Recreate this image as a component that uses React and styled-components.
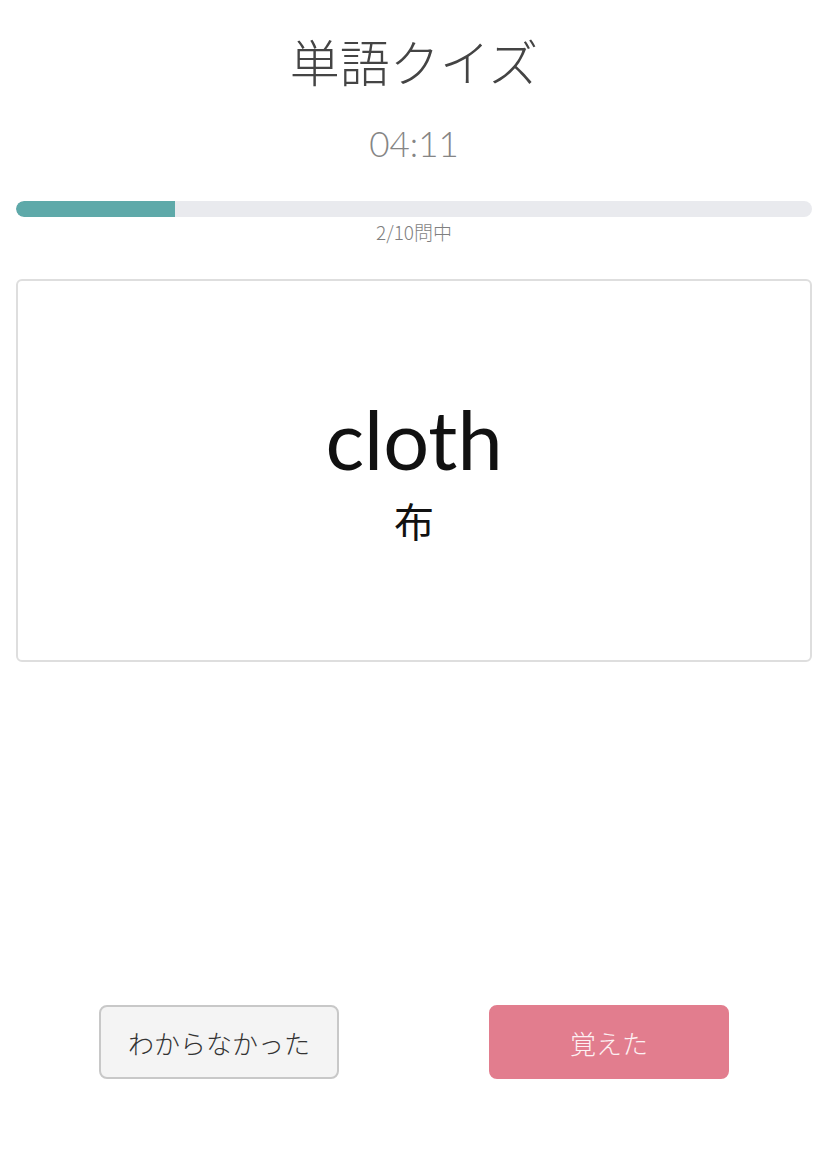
import React from 'react';
import styled, { createGlobalStyle } from 'styled-components';

const GlobalStyle = createGlobalStyle`
  html, body {
    margin: 0;
    padding: 0;
    background: #fff;
  }
  body {
    font-family: Lato, "Noto Sans CJK JP", sans-serif;
  }
`;

const Page = styled.div`
  width: 828px;
  height: 1150px;
  box-sizing: border-box;
  padding: 0 16px;
  display: flex;
  flex-direction: column;
`;

const Title = styled.h1`
  margin: 28px 0 0;
  text-align: center;
  font-family: "Noto Sans CJK JP", sans-serif;
  font-size: 50px;
  font-weight: 300;
  line-height: 64px;
  color: #444;
`;

const Timer = styled.div`
  margin-top: 31px;
  text-align: center;
  font-family: Lato, sans-serif;
  font-size: 35px;
  font-weight: 300;
  line-height: 40px;
  color: #858585;
`;

const ProgressTrack = styled.div`
  margin-top: 38px;
  height: 16px;
  border-radius: 8px;
  background: #e9eaee;
  overflow: hidden;
`;

const ProgressFill = styled.div`
  height: 100%;
  background: #5ea9a9;
  border-radius: 8px 0 0 8px;
`;

const ProgressLabel = styled.div`
  margin-top: 2px;
  text-align: center;
  font-family: "Noto Sans CJK JP", sans-serif;
  font-size: 19px;
  font-weight: 300;
  line-height: 26px;
  color: #7f7f7f;
`;

const Card = styled.div`
  margin-top: 34px;
  height: 383px;
  box-sizing: border-box;
  padding-top: 113px;
  border: 2px solid #dedede;
  border-radius: 6px;
  display: flex;
  flex-direction: column;
  align-items: center;
`;

const Word = styled.div`
  font-family: Lato, sans-serif;
  font-size: 81px;
  font-weight: 400;
  line-height: 90px;
  color: #111;
`;

const Meaning = styled.div`
  margin-top: 10px;
  font-family: "Noto Sans CJK JP", sans-serif;
  font-size: 40px;
  font-weight: 400;
  line-height: 52px;
  color: #111;
`;

const Actions = styled.div`
  margin-top: auto;
  margin-bottom: 71px;
  display: flex;
  justify-content: center;
  gap: 150px;
`;

const Button = styled.button`
  width: 240px;
  height: 74px;
  box-sizing: border-box;
  border-radius: 8px;
  font-family: "Noto Sans CJK JP", sans-serif;
  font-size: 26px;
  font-weight: 300;
  cursor: pointer;
  border: 2px solid ${(p) => (p.$primary ? '#e27d8e' : '#c8c8c8')};
  background: ${(p) => (p.$primary ? '#e27d8e' : '#f4f4f4')};
  color: ${(p) => (p.$primary ? '#fdf1f3' : '#333')};
`;

export default function App() {
  const current = 2;
  const total = 10;
  return (
    <>
      <GlobalStyle />
      <Page>
        <Title>単語クイズ</Title>
        <Timer>04:11</Timer>
        <ProgressTrack>
          <ProgressFill style={{ width: `${(current / total) * 100}%` }} />
        </ProgressTrack>
        <ProgressLabel>{current}/{total}問中</ProgressLabel>
        <Card>
          <Word>cloth</Word>
          <Meaning>布</Meaning>
        </Card>
        <Actions>
          <Button>わからなかった</Button>
          <Button $primary>覚えた</Button>
        </Actions>
      </Page>
    </>
  );
}
